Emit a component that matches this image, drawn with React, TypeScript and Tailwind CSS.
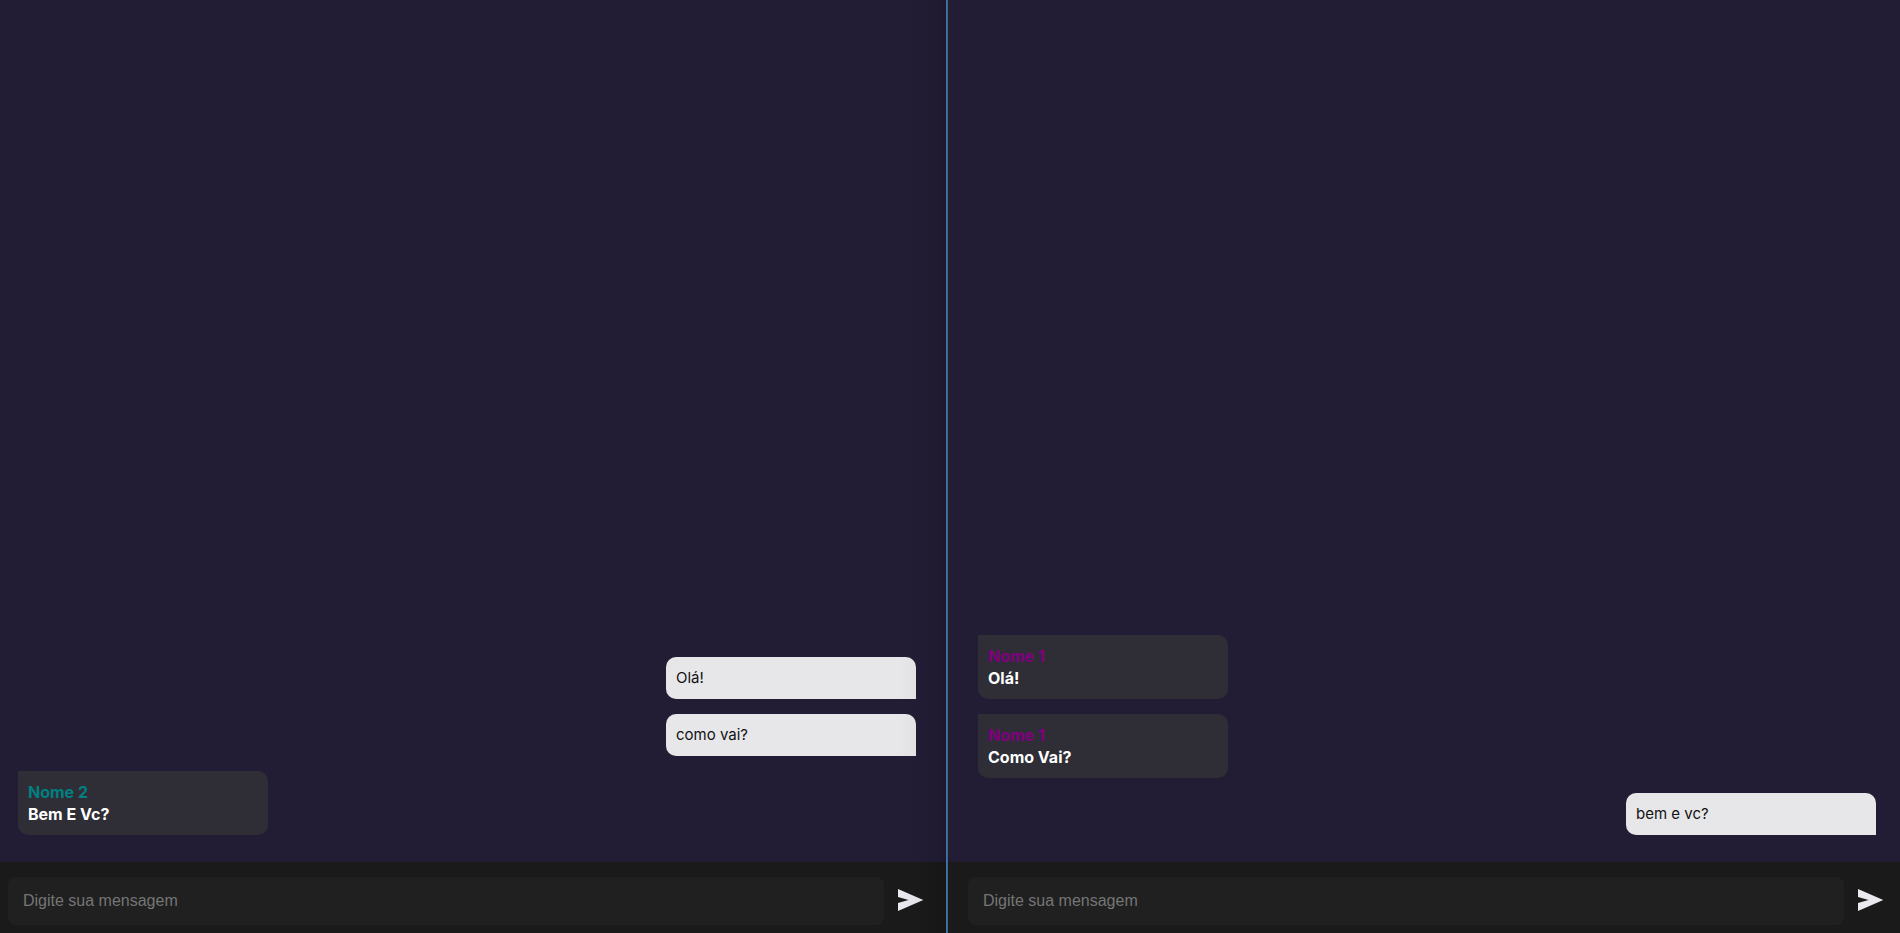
import { FormEvent, useState } from "react";

type Message = { id: number; text: string; author?: string; color?: string };

const leftMessages: Message[] = [
  { id: 1, text: "Olá!" },
  { id: 2, text: "como vai?" },
  { id: 3, text: "Bem E Vc?", author: "Nome 2", color: "text-[#008080]" },
];

const rightMessages: Message[] = [
  { id: 1, text: "Olá!", author: "Nome 1", color: "text-[#800080]" },
  { id: 2, text: "Como Vai?", author: "Nome 1", color: "text-[#800080]" },
  { id: 3, text: "bem e vc?" },
];

function Bubble({ message }: { message: Message }) {
  if (message.author) {
    return (
      <li className="w-[250px] self-start rounded-[10px] rounded-tl-none bg-[#2f2d36] p-[10px] text-[16px] leading-[22px] font-bold text-white">
        <p className={message.color}>{message.author}</p>
        <p>{message.text}</p>
      </li>
    );
  }
  return (
    <li className="w-[250px] self-end rounded-[10px] rounded-br-none bg-[#e7e7e9] p-[10px] text-[15px] leading-[22px] text-[#121214]">
      <p>{message.text}</p>
    </li>
  );
}

function Chat({ name, initial, inset }: { name: string; initial: Message[]; inset: string }) {
  const [messages, setMessages] = useState(initial);
  const [draft, setDraft] = useState("");

  function send(event: FormEvent) {
    event.preventDefault();
    if (!draft.trim()) return;
    setMessages([...messages, { id: messages.length + 1, text: draft }]);
    setDraft("");
  }

  return (
    <section aria-label={name} className="flex min-w-0 flex-1 flex-col">
      <div className={`flex min-h-0 flex-1 flex-col overflow-hidden bg-[#221d35] ${inset}`}>
        <ul className="mt-auto flex flex-col gap-[15px] pr-6 pb-[27px] pl-[18px]">
          {messages.map((message) => (
            <Bubble key={message.id} message={message} />
          ))}
        </ul>
      </div>
      <form onSubmit={send} className={`bg-[#1a1a1a] ${inset}`}>
        <div className="flex items-center pt-[15px] pr-4 pb-2 pl-2">
          <input
            type="text"
            aria-label="Digite sua mensagem"
            placeholder="Digite sua mensagem"
            value={draft}
            onChange={(event) => setDraft(event.target.value)}
            className="h-12 min-w-0 flex-1 rounded-[8px] bg-[#202020] px-[15px] font-['Liberation_Sans',sans-serif] text-[16px] text-[#e6e6e8] outline-none placeholder:text-[#757575]"
          />
          <button type="submit" aria-label="Enviar" className="ml-[14px] flex w-[26px] justify-center pb-[2px]">
            <svg viewBox="0 0 26 22" className="h-[22px] w-[26px] fill-[#e9e9ee]">
              <path d="M0 0 25.3 11 0 22V14L10.5 11 0 8Z" />
            </svg>
          </button>
        </div>
      </form>
    </section>
  );
}

export default function App() {
  return (
    <main className="grid h-screen grid-cols-[calc(50%-2px)_1fr] font-[Inter,sans-serif]">
      <div className="relative flex min-w-0 border-r border-[#0a74d0]">
        <Chat name="Nome 1" initial={leftMessages} inset="pr-[7px]" />
        <div className="pointer-events-none absolute inset-y-0 right-0 w-12 border-r border-[#6b6868] bg-linear-to-r from-transparent via-black/3 to-black/15" />
      </div>
      <div className="flex min-w-0">
        <Chat name="Nome 2" initial={rightMessages} inset="pl-3" />
      </div>
    </main>
  );
}
